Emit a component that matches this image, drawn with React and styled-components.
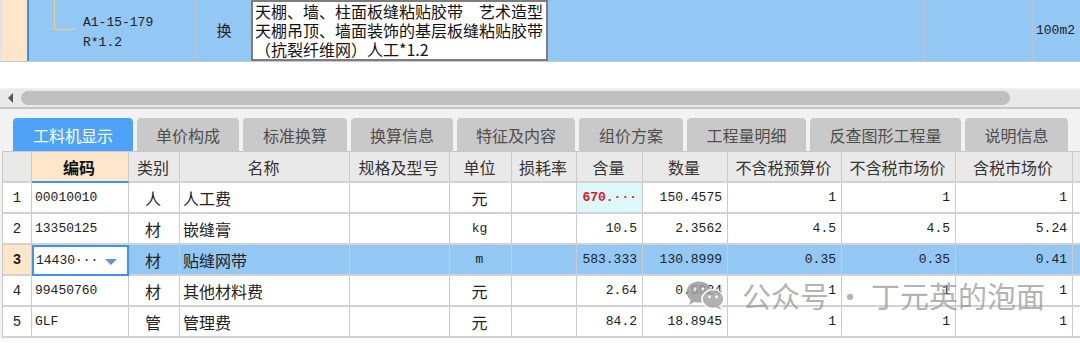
import React from "react";
import styled, { createGlobalStyle } from "styled-components";

const GlobalStyle = createGlobalStyle`
  html, body {
    margin: 0;
    padding: 0;
    background: #ffffff;
  }
  * {
    box-sizing: border-box;
  }
`;

const CJK = `"Noto Sans CJK SC", "Noto Sans", sans-serif`;
const MONO = `"Liberation Mono", "Noto Sans CJK SC", monospace`;

const COLS = [29, 97, 51, 170, 100, 62, 65, 66, 85, 114, 114, 117, 8];

const HEADERS = [
  "",
  "编码",
  "类别",
  "名称",
  "规格及型号",
  "单位",
  "损耗率",
  "含量",
  "数量",
  "不含税预算价",
  "不含税市场价",
  "含税市场价",
  "",
];

const ROWS = [
  ["00010010", "人", "人工费", "", "元", "", "670.···", "150.4575", "1", "1", "1"],
  ["13350125", "材", "嵌缝膏", "", "kg", "", "10.5", "2.3562", "4.5", "4.5", "5.24"],
  ["14430···", "材", "贴缝网带", "", "m", "", "583.333", "130.8999", "0.35", "0.35", "0.41"],
  ["99450760", "材", "其他材料费", "", "元", "", "2.64", "0.5924", "1", "1", "1"],
  ["GLF", "管", "管理费", "", "元", "", "84.2", "18.8945", "1", "1", "1"],
];

const TABS = [
  { label: "工料机显示", w: 120, active: true },
  { label: "单价构成", w: 102 },
  { label: "标准换算", w: 104 },
  { label: "换算信息", w: 102 },
  { label: "特征及内容", w: 118 },
  { label: "组价方案", w: 104 },
  { label: "工程量明细", w: 119 },
  { label: "反查图形工程量", w: 151 },
  { label: "说明信息", w: 103 },
];

// left, center or right per column of a data row
const ALIGN = ["center", "left", "center", "left", "left", "center", "left", "right", "right", "right", "right", "right", "left"];

function App() {
  return (
    <>
      <GlobalStyle />
      <Screen>
        <TopRow>
          <LeftMark />
          <CodeCell>
            <TreeLine />
            <CodeText>
              A1-15-179
              <br />
              R*1.2
            </CodeText>
          </CodeCell>
          <SwapCell>换</SwapCell>
          <DescBox>
            天棚、墙、柱面板缝粘贴胶带　艺术造型
            <br />
            天棚吊顶、墙面装饰的基层板缝粘贴胶带
            <br />
            （抗裂纤维网）人工*1.2
          </DescBox>
          <BlankCell $w={377} />
          <BlankCell $w={108} />
          <UnitCell>100m2</UnitCell>
        </TopRow>

        <Gap />

        <ScrollBar>
          <ArrowLeft />
          <Thumb />
        </ScrollBar>

        <Panel>
          <TabBar>
            {TABS.map((t) => (
              <Tab key={t.label} $w={t.w} $active={t.active}>
                {t.label}
              </Tab>
            ))}
          </TabBar>

          <Grid>
            {HEADERS.map((h, i) => (
              <HeadCell key={"h" + i} $focus={i === 1}>
                {h}
              </HeadCell>
            ))}
            {ROWS.map((row, r) => {
              const selected = r === 2;
              return (
                <React.Fragment key={"r" + r}>
                  <NumCell $selected={selected}>{r + 1}</NumCell>
                  {row.map((v, c) => {
                    const col = c + 1;
                    if (selected && col === 1) {
                      return (
                        <EditCell key={col}>
                          <span>{v}</span>
                          <DropTri />
                        </EditCell>
                      );
                    }
                    if (r === 0 && col === 7) {
                      return (
                        <Cell key={col} $align="right" $mono $tint>
                          <RedValue>{v}</RedValue>
                        </Cell>
                      );
                    }
                    const isCjk = /[\u4e00-\u9fff]/.test(v);
                    return (
                      <Cell key={col} $align={ALIGN[col]} $mono={!isCjk} $selected={selected}>
                        {v}
                      </Cell>
                    );
                  })}
                  <Cell $selected={selected} />
                </React.Fragment>
              );
            })}
          </Grid>
          <Rest />
        </Panel>

        <Watermark>
          <svg width="42" height="30" viewBox="0 0 42 30">
            <ellipse cx="13" cy="12" rx="12.5" ry="10.5" fill="#9c9c9c" />
            <path d="M5 19 L3 25 L10 21 Z" fill="#9c9c9c" />
            <circle cx="9" cy="9" r="1.6" fill="#ffffff" />
            <circle cx="17" cy="9" r="1.6" fill="#ffffff" />
            <ellipse cx="27" cy="19" rx="11" ry="9.5" fill="#a4a4a4" stroke="#ffffff" strokeWidth="1.6" />
            <path d="M33 26 L36 30 L30 27.5 Z" fill="#a4a4a4" />
            <circle cx="23.5" cy="17" r="1.4" fill="#ffffff" />
            <circle cx="30.5" cy="17" r="1.4" fill="#ffffff" />
          </svg>
          <WaterText>公众号 · 丁元英的泡面</WaterText>
        </Watermark>
      </Screen>
    </>
  );
}

export default App;

const Screen = styled.div`
  position: relative;
  width: 1080px;
  height: 343px;
  overflow: hidden;
  background: #ffffff;
  display: flex;
  flex-direction: column;
`;

const TopRow = styled.div`
  display: flex;
  height: 62px;
  flex: 0 0 62px;
  background: #93c8f5;
  border-bottom: 1px solid #c3c9cf;
  border-left: 2px solid #e4e4e4;
`;

const LeftMark = styled.div`
  width: 27px;
  background: #fde6c9;
  border-right: 2px solid #3d8ef0;
`;

const CodeCell = styled.div`
  position: relative;
  width: 168px;
  display: flex;
  align-items: center;
  padding-left: 54px;
  border-right: 1px solid #b9c4ce;
`;

const TreeLine = styled.div`
  position: absolute;
  left: 25px;
  top: 0;
  width: 22px;
  height: 30px;
  border-left: 1px solid #efc98e;
  border-bottom: 1px solid #efc98e;
`;

const CodeText = styled.div`
  font-family: ${MONO};
  font-size: 13px;
  line-height: 20px;
  color: #222;
  padding-top: 4px;
`;

const SwapCell = styled.div`
  width: 54px;
  display: flex;
  align-items: center;
  justify-content: center;
  font-family: ${CJK};
  font-size: 15px;
  color: #222;
  padding-bottom: 3px;
`;

const DescBox = styled.div`
  width: 297px;
  height: 61px;
  background: #ffffff;
  border: 2px solid #7d7d7d;
  padding: 0 0 0 2px;
  font-family: ${CJK};
  font-size: 16px;
  line-height: 19px;
  color: #111;
  white-space: nowrap;
  overflow: hidden;
`;

const BlankCell = styled.div`
  width: ${(p) => p.$w}px;
  border-right: 1px solid #b9c4ce;
`;

const UnitCell = styled.div`
  flex: 1;
  display: flex;
  align-items: center;
  padding-left: 3px;
  font-family: ${MONO};
  font-size: 13px;
  color: #222;
`;

const Gap = styled.div`
  flex: 0 0 26px;
  background: #ffffff;
`;

const ScrollBar = styled.div`
  position: relative;
  flex: 0 0 21px;
  display: flex;
  align-items: center;
  background: #e9e9e9;
  border-top: 1px solid #f2f2f2;
  border-bottom: 2px solid #c6c6c6;
  padding-left: 8px;
`;

const ArrowLeft = styled.div`
  width: 0;
  height: 0;
  border-top: 5px solid transparent;
  border-bottom: 5px solid transparent;
  border-right: 5px solid #555;
  margin-right: 8px;
`;

const Thumb = styled.div`
  width: 989px;
  height: 14px;
  border-radius: 7px;
  background: #c0c0c0;
`;

const Panel = styled.div`
  flex: 1;
  display: flex;
  flex-direction: column;
  background: #f2f2f2;
  padding-top: 9px;
`;

const TabBar = styled.div`
  display: flex;
  gap: 4px;
  padding-left: 13px;
  height: 33px;
`;

const Tab = styled.div`
  width: ${(p) => p.$w}px;
  height: 33px;
  display: flex;
  align-items: center;
  justify-content: center;
  border-radius: 4px 4px 0 0;
  font-family: ${CJK};
  font-size: 16px;
  color: ${(p) => (p.$active ? "#ffffff" : "#4e4e4e")};
  background: ${(p) => (p.$active ? "#4ea3f8" : "#c9c9c9")};
`;

const Grid = styled.div`
  display: grid;
  grid-template-columns: ${COLS.map((w) => w + "px").join(" ")};
  grid-auto-rows: 31px;
  margin-left: 2px;
  border-top: 1px solid #c8c8c8;
  border-left: 1px solid #c8c8c8;
  background: #ffffff;
`;

const Cell = styled.div`
  display: flex;
  align-items: center;
  justify-content: ${(p) =>
    p.$align === "right" ? "flex-end" : p.$align === "center" ? "center" : "flex-start"};
  padding: 0 5px 0 3px;
  border-right: 1px solid #cbcbcb;
  border-bottom: 2px solid #d2d2d2;
  font-family: ${(p) => (p.$mono ? MONO : CJK)};
  font-size: ${(p) => (p.$mono ? "13px" : "16px")};
  color: #222;
  white-space: nowrap;
  overflow: hidden;
  background: ${(p) => (p.$tint ? "#ddf8fa" : p.$selected ? "#93c8f5" : "#ffffff")};
`;

const HeadCell = styled(Cell)`
  justify-content: center;
  font-family: ${CJK};
  font-size: 16px;
  color: ${(p) => (p.$focus ? "#111" : "#333")};
  font-weight: ${(p) => (p.$focus ? 700 : 400)};
  background: ${(p) => (p.$focus ? "#fde6c9" : "#e9e9e9")};
  border-bottom: 2px solid ${(p) => (p.$focus ? "#3d93ee" : "#d2d2d2")};
`;

const NumCell = styled(Cell)`
  justify-content: center;
  padding: 0;
  font-family: ${MONO};
  font-size: 14px;
  font-weight: ${(p) => (p.$selected ? 700 : 400)};
  background: ${(p) => (p.$selected ? "#fde6c9" : "#ffffff")};
`;

const EditCell = styled(Cell)`
  justify-content: space-between;
  background: #ffffff;
  border: 2px solid #3d93ee;
  padding: 0 10px 0 2px;
  font-family: ${MONO};
  font-size: 13px;
`;

const DropTri = styled.div`
  width: 0;
  height: 0;
  border-left: 6px solid transparent;
  border-right: 6px solid transparent;
  border-top: 6px solid #5a98d4;
  margin-top: 2px;
`;

const RedValue = styled.span`
  color: #e8141c;
  font-weight: 700;
`;

const Rest = styled.div`
  flex: 1;
  background: #fafafa;
`;

const Watermark = styled.div`
  position: absolute;
  left: 686px;
  top: 280px;
  display: flex;
  align-items: center;
  gap: 14px;
  opacity: 0.85;
  pointer-events: none;
`;

const WaterText = styled.span`
  font-family: ${CJK};
  font-size: 29px;
  line-height: 30px;
  color: rgba(150, 150, 150, 0.85);
  white-space: pre;
`;
